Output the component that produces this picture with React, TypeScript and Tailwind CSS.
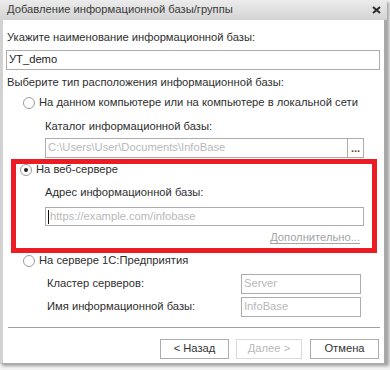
import React from "react";

function Radio({ checked }: { checked?: boolean }) {
  return (
    <span className="flex h-[12px] w-[12px] shrink-0 items-center justify-center rounded-full border border-[#9c9c9c] bg-white">
      {checked && <span className="h-[4px] w-[4px] rounded-full bg-[#222]" />}
    </span>
  );
}

function Field({ text, className }: { text: string; className: string }) {
  return (
    <div className={`flex h-[20px] items-center border border-[#acacac] bg-white px-[2px] text-[#b8b8b8] ${className}`}>
      {text}
    </div>
  );
}

function Button({ label, disabled, className }: { label: string; disabled?: boolean; className: string }) {
  return (
    <div
      className={`flex h-[20px] items-center justify-center border bg-white ${
        disabled ? "border-[#dadada] text-[#b8b8b8]" : "border-[#acacac] text-[#333]"
      } ${className}`}
    >
      {label}
    </div>
  );
}

export default function App() {
  return (
    <div className="h-[370px] w-[390px] bg-[#f4f4f4] font-['Liberation_Sans',Arial,sans-serif] text-[11.2px] leading-none text-[#2e2e2e]">
      <div className="flex h-[364px] w-[387px] flex-col bg-[#d9d9d9] shadow-[2px_2px_3px_rgba(0,0,0,0.35)]">
        {/* title bar */}
        <div className="flex h-[20px] shrink-0 items-center justify-between bg-gradient-to-b from-[#ececec] to-[#d3d3d3] pl-[7px] pr-[6px] text-[#3a3a3a]">
          <span>Добавление информационной базы/группы</span>
          <svg width="9" height="8" viewBox="0 0 9 8">
            <path d="M1 1 L8 7 M8 1 L1 7" stroke="#2a2a2a" strokeWidth="2" />
          </svg>
        </div>

        <div className="flex flex-1 flex-col border-r-[3px] border-b-[1px] border-l-[3px] border-r-[#a8a8a8] border-b-[#a8a8a8] border-l-[#d2d2d2] bg-white">
          <div className="ml-[4px] mt-[10px] flex h-[16px] items-center">Укажите наименование информационной базы:</div>
          <div className="ml-[3px] mt-[4px] flex h-[20px] w-[374px] items-center border border-[#acacac] px-[2px] text-[#222]">
            УТ_demo
          </div>

          <div className="ml-[4px] mt-[5px] flex h-[16px] items-center">Выберите тип расположения информационной базы:</div>

          <div className="ml-[20px] mt-[4px] flex h-[16px] items-center gap-[4px]">
            <Radio />
            <span>На данном компьютере или на компьютере в локальной сети</span>
          </div>
          <div className="ml-[42px] mt-[8px] flex h-[16px] items-center">Каталог информационной базы:</div>
          <div className="ml-[42px] mt-[3px] flex h-[20px] w-[319px]">
            <div className="flex flex-1 items-center border border-[#acacac] px-[2px] text-[#b8b8b8]">
              C:\Users\User\Documents\InfoBase
            </div>
            <div className="flex w-[16px] items-end justify-center border border-l-0 border-[#acacac] pb-[3px] text-[11px] font-bold leading-none text-[#5c4a1c]">
              ...
            </div>
          </div>

          {/* highlighted web-server block */}
          <div className="ml-[8px] mt-[1px] flex h-[94px] w-[366px] flex-col border-[5px] border-[#ec1c24]">
            <div className="ml-[4px] flex h-[12px] items-center gap-[4px]">
              <Radio checked />
              <span>На веб-сервере</span>
            </div>
            <div className="ml-[29px] mt-[9px] flex h-[16px] items-center">Адрес информационной базы:</div>
            <div className="ml-[29px] mt-[6px] flex h-[19px] w-[319px] items-center border border-[#acacac] px-[2px] text-[#b8b8b8]">
              <span className="mr-[1px] h-[14px] w-px bg-[#111]" />
              https://example.com/infobase
            </div>
            <div className="mt-[4px] flex h-[16px] w-[344px] items-center justify-end">
              <span className="text-[#a3a3a3] underline underline-offset-2">Дополнительно...</span>
            </div>
          </div>

          <div className="ml-[20px] flex h-[16px] items-center gap-[4px]">
            <Radio />
            <span>На сервере 1С:Предприятия</span>
          </div>
          <div className="ml-[44px] mt-[5px] flex items-center">
            <span className="w-[194px]">Кластер серверов:</span>
            <Field text="Server" className="w-[120px]" />
          </div>
          <div className="ml-[44px] mt-[3px] flex items-center">
            <span className="w-[194px]">Имя информационной базы:</span>
            <Field text="InfoBase" className="w-[120px]" />
          </div>

          <div className="ml-[5px] mt-[10px] h-px w-[372px] bg-[#a0a0a0]" />

          <div className="mt-[11px] flex gap-[7px] pl-[157px]">
            <Button label="< Назад" className="w-[69px]" />
            <Button label="Далее >" disabled className="w-[66px]" />
            <Button label="Отмена" className="ml-[1px] w-[69px]" />
          </div>
        </div>
      </div>
    </div>
  );
}
